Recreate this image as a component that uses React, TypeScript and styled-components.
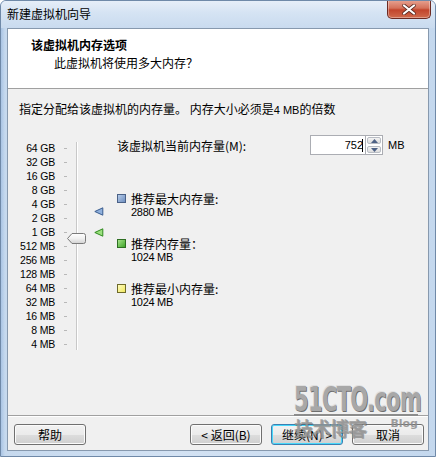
import React from "react";
import styled, { createGlobalStyle } from "styled-components";

const Global = createGlobalStyle`
  html, body { margin: 0; padding: 0; background: #fff; }
  body { font-family: "Noto Sans CJK SC", "Liberation Sans", sans-serif; font-size: 12px; color: #000; }
  * { box-sizing: border-box; }
`;

const Window = styled.div`
  width: 436px;
  height: 457px;
  display: flex;
  flex-direction: column;
  background: linear-gradient(to right, #a9c4e4 0px, #c6d9ee 4px, #d3e2f3 40%, #c4d8ee 100%);
  border: 1px solid #6f89a8;
  border-radius: 6px 6px 0 0;
  overflow: hidden;
  position: relative;
`;

const TitleBar = styled.div`
  height: 27px;
  flex: none;
  display: flex;
  align-items: flex-start;
  justify-content: space-between;
  padding-left: 6px;
  background: linear-gradient(to bottom, #e6eef8 0px, #d5e3f3 12px, #c9dbef 27px);
`;

const TitleText = styled.span`
  margin-top: 5px;
  font-size: 12px;
  line-height: 16px;
  color: #000;
`;

const CloseButton = styled.div`
  width: 44px;
  height: 19px;
  margin-right: 4px;
  margin-top: -1px;
  border: 1px solid #6c2a22;
  border-top: none;
  border-radius: 0 0 5px 5px;
  background: linear-gradient(to bottom, #e8a493 0%, #d4715a 45%, #c2452c 55%, #d06a4c 100%);
  display: flex;
  align-items: center;
  justify-content: center;
  box-shadow: inset 0 0 0 1px rgba(255, 255, 255, 0.35);
`;

const Client = styled.div`
  flex: 1;
  margin: 0 6px 5px 6px;
  border: 1px solid #8799ae;
  background: #f0f0f0;
  display: flex;
  flex-direction: column;
  position: relative;
`;

const Header = styled.div`
  height: 60px;
  flex: none;
  background: #fff;
  border-bottom: 1px solid #a0a0a0;
  padding: 7px 0 0 23px;
  display: flex;
  flex-direction: column;
`;

const HeaderTitle = styled.div`
  font-weight: bold;
  font-size: 12px;
  line-height: 18px;
`;

const HeaderSub = styled.div`
  font-size: 12px;
  line-height: 18px;
  padding-left: 23px;
`;

const Body = styled.div`
  flex: 1;
  display: flex;
  flex-direction: column;
  padding: 12px 0 0 11px;
`;

const Instruction = styled.div`
  font-size: 12px;
  line-height: 16px;
`;

const Small = styled.span`
  font-family: "Liberation Sans", sans-serif;
  font-size: 11px;
`;

const Main = styled.div`
  display: flex;
  margin-top: 23px;
`;

const Scale = styled.div`
  position: relative;
  width: 98px;
  display: flex;
`;

const Labels = styled.div`
  width: 36px;
  display: flex;
  flex-direction: column;
`;

const ScaleLabel = styled.div`
  height: 14px;
  line-height: 14px;
  font-family: "Liberation Sans", sans-serif;
  font-size: 10.5px;
  letter-spacing: -0.2px;
  text-align: right;
  white-space: nowrap;
  color: #000;
`;

const Ticks = styled.div`
  width: 12px;
  display: flex;
  flex-direction: column;
  align-items: flex-end;
`;

const Tick = styled.div`
  height: 14px;
  display: flex;
  align-items: center;
  &::after {
    content: "";
    width: 3px;
    height: 1px;
    background: #b8b8b8;
  }
`;

const Track = styled.div`
  margin-left: 9px;
  margin-top: 1px;
  width: 2px;
  height: 208px;
  border-left: 1px solid #c8c8c8;
  border-right: 1px solid #ffffff;
`;

const Marker = styled.div<{ $top: number; $left: number }>`
  position: absolute;
  top: ${(p) => p.$top}px;
  left: ${(p) => p.$left}px;
  line-height: 0;
`;

const Info = styled.div`
  flex: 1;
  display: flex;
  flex-direction: column;
`;

const CurrentRow = styled.div`
  display: flex;
  align-items: center;
  height: 20px;
  margin-top: -6px;
`;

const CurrentLabel = styled.div`
  flex: 1;
  font-size: 12px;
`;

const NumberBox = styled.div`
  width: 56px;
  height: 20px;
  border: 1px solid #abadb3;
  background: #fff;
  display: flex;
  align-items: center;
  justify-content: flex-end;
  padding-right: 2px;
  font-family: "Liberation Sans", sans-serif;
  font-size: 11px;
`;

const Caret = styled.span`
  display: inline-block;
  width: 1px;
  height: 13px;
  background: #000;
  margin-left: -1px;
`;

const Spinner = styled.div`
  width: 17px;
  height: 20px;
  display: flex;
  flex-direction: column;
  border: 1px solid #abadb3;
  border-left: none;
  background: #fff;
`;

const SpinHalf = styled.div`
  flex: 1;
  margin: 1px;
  border: 1px solid #b9bdc4;
  border-radius: 2px;
  background: linear-gradient(to bottom, #f4f4f4, #dcdcdc);
  display: flex;
  align-items: center;
  justify-content: center;
`;

const Unit = styled.div`
  width: 45px;
  padding-left: 5px;
  font-family: "Liberation Sans", sans-serif;
  font-size: 11px;
`;

const Legends = styled.div`
  display: flex;
  flex-direction: column;
  gap: 18px;
  margin-top: 36px;
`;

const Legend = styled.div`
  display: grid;
  grid-template-columns: 14px 1fr;
  grid-template-rows: 15px 12px;
  align-items: center;
`;

const Swatch = styled.div<{ $c1: string; $c2: string; $border: string }>`
  width: 9px;
  height: 9px;
  border: 1px solid ${(p) => p.$border};
  background: linear-gradient(135deg, ${(p) => p.$c1}, ${(p) => p.$c2});
`;

const LegendTitle = styled.div`
  font-size: 12px;
  line-height: 15px;
`;

const LegendValue = styled.div`
  grid-column: 2;
  font-family: "Liberation Sans", sans-serif;
  font-size: 11px;
  line-height: 12px;
  letter-spacing: -0.3px;
`;

const Footer = styled.div`
  flex: none;
  border-top: 1px solid #a0a0a0;
  box-shadow: inset 0 1px 0 #ffffff;
  height: 35px;
  display: flex;
  align-items: flex-start;
  padding: 8px 0 0 6px;
  gap: 9px;
`;

const Button = styled.button<{ $default?: boolean }>`
  width: 72px;
  height: 21px;
  padding: 0;
  font-family: "Noto Sans CJK SC", "Liberation Sans", sans-serif;
  font-size: 12px;
  color: #000;
  border: 1px solid ${(p) => (p.$default ? "#3c7fb1" : "#707070")};
  border-radius: 3px;
  background: linear-gradient(to bottom, #f2f2f2 0%, #ebebeb 50%, #dddddd 51%, #cfcfcf 100%);
  box-shadow: inset 0 0 0 1px ${(p) => (p.$default ? "#48d8fb" : "#fbfbfb")};
  display: flex;
  align-items: center;
  justify-content: center;
`;

const Spacer = styled.div`
  width: 86px;
`;

const Watermark = styled.div`
  position: absolute;
  left: 286px;
  top: 356px;
  width: 124px;
  display: flex;
  flex-direction: column;
  pointer-events: none;
`;

const WmLogo = styled.div`
  font-family: "DejaVu Sans Condensed", "DejaVu Sans", sans-serif;
  font-weight: bold;
  font-size: 33px;
  line-height: 29px;
  letter-spacing: -1px;
  color: #a8a8a8;
  text-shadow: 1px 1px 0 #6e6e6e, -1px -1px 0 #e0e0e0;
  transform: scaleX(0.71);
  transform-origin: left;
  white-space: nowrap;
`;

const WmBar = styled.div`
  height: 2px;
  background: #8c8c8c;
  margin-top: 0px;
`;

const WmSub = styled.div`
  display: flex;
  justify-content: space-between;
  align-items: flex-start;
  margin-top: 2px;
`;

const WmCn = styled.span`
  font-size: 19px;
  line-height: 20px;
  font-weight: bold;
  color: rgba(150, 150, 150, 0.8);
  text-shadow: 1px 1px 0 rgba(90, 90, 90, 0.5);
  letter-spacing: -1px;
`;

const WmBlog = styled.span`
  font-family: "DejaVu Sans", sans-serif;
  font-weight: bold;
  font-size: 11px;
  line-height: 12px;
  color: rgba(140, 140, 140, 0.85);
`;

const scale = [
  "64 GB", "32 GB", "16 GB", "8 GB", "4 GB", "2 GB", "1 GB",
  "512 MB", "256 MB", "128 MB", "64 MB", "32 MB", "16 MB", "8 MB", "4 MB",
];

// y position for a value (MB) on the log scale; 64 GB row centre = 7px
const yFor = (mb: number) => 7 + (Math.log2(65536) - Math.log2(mb)) * 14;

const Arrow = ({ fill, stroke }: { fill: string; stroke: string }) => (
  <svg width="10" height="9" viewBox="0 0 10 9">
    <path d="M0.8 4.5 L8.8 0.8 L8.8 8.2 Z" fill={fill} stroke={stroke} strokeWidth="1" strokeLinejoin="round" />
  </svg>
);

const Thumb = () => (
  <svg width="19" height="11" viewBox="0 0 19 11">
    <defs>
      <linearGradient id="th" x1="0" y1="0" x2="0" y2="1">
        <stop offset="0" stopColor="#ffffff" />
        <stop offset="0.5" stopColor="#f0f0f0" />
        <stop offset="1" stopColor="#d2d2d2" />
      </linearGradient>
    </defs>
    <path d="M0.5 5.5 L5 0.5 L16.5 0.5 Q18.5 0.5 18.5 2.5 L18.5 8.5 Q18.5 10.5 16.5 10.5 L5 10.5 Z" fill="url(#th)" stroke="#7a7a7a" />
  </svg>
);

export default function App() {
  return (
    <>
      <Global />
      <Window>
        <TitleBar>
          <TitleText>新建虚拟机向导</TitleText>
          <CloseButton>
            <svg width="14" height="11" viewBox="0 0 14 11">
              <path d="M2 1.5 L12 9.5 M12 1.5 L2 9.5" stroke="#5a2a22" strokeWidth="3.6" strokeLinecap="round" />
              <path d="M2 1.5 L12 9.5 M12 1.5 L2 9.5" stroke="#ffffff" strokeWidth="2.2" strokeLinecap="round" />
            </svg>
          </CloseButton>
        </TitleBar>
        <Client>
          <Header>
            <HeaderTitle>该虚拟机内存选项</HeaderTitle>
            <HeaderSub>此虚拟机将使用多大内存？</HeaderSub>
          </Header>
          <Body>
            <Instruction>
              指定分配给该虚拟机的内存量。 内存大小必须是<Small>4 MB</Small>的倍数
            </Instruction>
            <Main>
              <Scale>
                <Labels>
                  {scale.map((s) => (
                    <ScaleLabel key={s}>{s}</ScaleLabel>
                  ))}
                </Labels>
                <Ticks>
                  {scale.map((s) => (
                    <Tick key={s} />
                  ))}
                </Ticks>
                <Track />
                <Marker $top={yFor(752) - 5} $left={48}>
                  <Thumb />
                </Marker>
                <Marker $top={yFor(2880) - 4.5} $left={75}>
                  <Arrow fill="#8fb0dc" stroke="#3a5d8f" />
                </Marker>
                <Marker $top={yFor(1024) - 4.5} $left={75}>
                  <Arrow fill="#9be07e" stroke="#2f8a1e" />
                </Marker>
              </Scale>
              <Info>
                <CurrentRow>
                  <CurrentLabel>该虚拟机当前内存量(M):</CurrentLabel>
                  <NumberBox>
                    752<Caret />
                  </NumberBox>
                  <Spinner>
                    <SpinHalf>
                      <svg width="7" height="4" viewBox="0 0 7 4"><path d="M0 4 L3.5 0 L7 4 Z" fill="#4d6185" /></svg>
                    </SpinHalf>
                    <SpinHalf>
                      <svg width="7" height="4" viewBox="0 0 7 4"><path d="M0 0 L3.5 4 L7 0 Z" fill="#4d6185" /></svg>
                    </SpinHalf>
                  </Spinner>
                  <Unit>MB</Unit>
                </CurrentRow>
                <Legends>
                  <Legend>
                    <Swatch $c1="#b5cbe8" $c2="#6f8fc0" $border="#4a6187" />
                    <LegendTitle>推荐最大内存量:</LegendTitle>
                    <LegendValue>2880 MB</LegendValue>
                  </Legend>
                  <Legend>
                    <Swatch $c1="#a6e38a" $c2="#3fa52a" $border="#2e6e22" />
                    <LegendTitle>推荐内存量：</LegendTitle>
                    <LegendValue>1024 MB</LegendValue>
                  </Legend>
                  <Legend>
                    <Swatch $c1="#fffcc0" $c2="#f0e860" $border="#6e6a2a" />
                    <LegendTitle>推荐最小内存量:</LegendTitle>
                    <LegendValue>1024 MB</LegendValue>
                  </Legend>
                </Legends>
              </Info>
            </Main>
          </Body>
          <Footer>
            <Button>帮助</Button>
            <Spacer />
            <Button>&lt; 返回(B)</Button>
            <Button $default>继续(N) &gt;</Button>
            <Button>取消</Button>
          </Footer>
          <Watermark>
            <WmLogo>51CTO.com</WmLogo>
            <WmBar />
            <WmSub>
              <WmCn>技术博客</WmCn>
              <WmBlog>Blog</WmBlog>
            </WmSub>
          </Watermark>
        </Client>
      </Window>
    </>
  );
}
